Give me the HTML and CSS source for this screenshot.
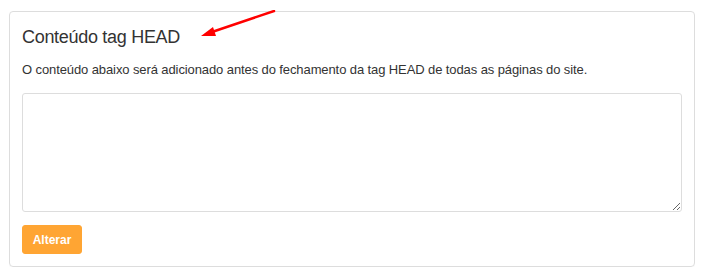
FILE: index.html
```html
<!DOCTYPE html>
<html lang="pt">
<head>
<meta charset="utf-8">
<link rel="stylesheet" href="styles.css">
</head>
<body>
<div class="panel">
  <h3 class="title">Conteúdo tag HEAD</h3>
  <p class="desc">O conteúdo abaixo será adicionado antes do fechamento da tag HEAD de todas as páginas do site.</p>
  <textarea class="code"></textarea>
  <button class="btn">Alterar</button>
</div>
<svg class="arrow" width="90" height="40" viewBox="0 0 90 40">
  <line x1="83" y1="1" x2="18" y2="23" stroke="#f00" stroke-width="2.5" stroke-linecap="round"/>
  <polygon points="10,26 22,17 25,26" fill="#f00"/>
</svg>
</body>
</html>
```
FILE: styles.css
```css
html, body {
  margin: 0;
  padding: 0;
  background: #fff;
}
body {
  padding: 11px 16px 0 9px;
  font-family: "Liberation Sans", Arial, sans-serif;
  color: #333;
  position: relative;
}
.panel {
  border: 1px solid #ddd;
  border-radius: 4px;
  padding: 12px 12px 12px 12px;
  display: flex;
  flex-direction: column;
  align-items: flex-start;
  box-shadow: 0 1px 1px rgba(0,0,0,0.03);
}
.title {
  margin: 0;
  font-size: 18px;
  line-height: 26px;
  letter-spacing: -0.3px;
  font-weight: normal;
  color: #333;
}
.desc {
  margin: 11px 0 0 0;
  font-size: 13px;
  line-height: 18px;
  letter-spacing: -0.1px;
  color: #333;
}
.code {
  margin-top: 14px;
  width: 660px;
  height: 119px;
  box-sizing: border-box;
  border: 1px solid #ddd;
  border-radius: 3px;
  resize: vertical;
  font-family: "Liberation Sans", Arial, sans-serif;
  padding: 6px 12px;
  outline: none;
}
.btn {
  margin-top: 13px;
  width: 60px;
  height: 29px;
  background: #ffa533;
  border: 1px solid #ffa533;
  border-radius: 3px;
  color: #fff;
  font-family: "Liberation Sans", Arial, sans-serif;
  font-weight: bold;
  font-size: 12px;
  padding: 0;
}
.arrow {
  position: absolute;
  left: 191px;
  top: 10px;
}
```
